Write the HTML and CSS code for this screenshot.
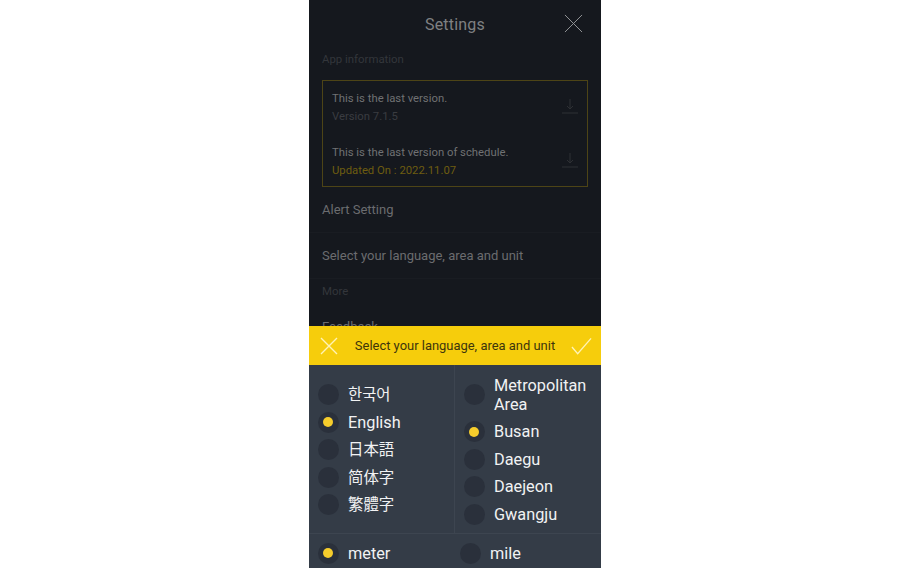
FILE: index.html
```html
<!DOCTYPE html>
<html lang="en">
<head>
<meta charset="utf-8">
<title>Settings</title>
<link rel="stylesheet" href="styles.css">
</head>
<body>
<main class="phone">
  <header class="top">
    <h1 class="title">Settings</h1>
    <svg class="close" viewBox="0 0 20 20"><path d="M1 1 19 19M19 1 1 19"/></svg>
  </header>
  <p class="label label-app">App information</p>
  <section class="box">
    <div class="box-row">
      <div class="box-text">
        <p class="box-main">This is the last version.</p>
        <p class="box-sub">Version 7.1.5</p>
      </div>
      <svg class="dl" viewBox="0 0 16 15"><path d="M8 0V10M5 7 8 10 11 7M0 14H16"/></svg>
    </div>
    <div class="box-row">
      <div class="box-text">
        <p class="box-main">This is the last version of schedule.</p>
        <p class="box-sub box-sub-gold">Updated On : 2022.11.07</p>
      </div>
      <svg class="dl" viewBox="0 0 16 15"><path d="M8 0V10M5 7 8 10 11 7M0 14H16"/></svg>
    </div>
  </section>
  <div class="item item-alert">Alert Setting</div>
  <div class="item">Select your language, area and unit</div>
  <p class="label label-more">More</p>
  <div class="item item-feedback">Feedback</div>

  <section class="sheet">
    <div class="bar">
      <svg class="bar-x" viewBox="0 0 18 18"><path d="M1 1 17 17M17 1 1 17"/></svg>
      <span class="bar-title">Select your language, area and unit</span>
      <svg class="bar-check" viewBox="0 0 22 18"><path d="M1 10 7 17 21 1"/></svg>
    </div>
    <div class="lists">
      <div class="list list-lang">
        <div class="opt"><i class="radio"></i><span class="cjk">한국어</span></div>
        <div class="opt"><i class="radio on"></i><span>English</span></div>
        <div class="opt"><i class="radio"></i><span class="cjk" lang="ja">日本語</span></div>
        <div class="opt"><i class="radio"></i><span class="cjk" lang="zh-CN">简体字</span></div>
        <div class="opt"><i class="radio"></i><span class="cjk" lang="zh-TW">繁體字</span></div>
      </div>
      <div class="list list-area">
        <div class="opt opt-tall"><i class="radio"></i><span>Metropolitan Area</span></div>
        <div class="opt"><i class="radio on"></i><span>Busan</span></div>
        <div class="opt"><i class="radio"></i><span>Daegu</span></div>
        <div class="opt"><i class="radio"></i><span>Daejeon</span></div>
        <div class="opt"><i class="radio"></i><span>Gwangju</span></div>
      </div>
    </div>
    <div class="units">
      <div class="opt unit-a"><i class="radio on"></i><span>meter</span></div>
      <div class="opt"><i class="radio"></i><span>mile</span></div>
    </div>
  </section>
</main>
</body>
</html>
```

FILE: styles.css
```css
* { box-sizing: border-box; }
html, body { margin: 0; height: 100%; background: #fff; }
body { display: flex; justify-content: center; overflow: hidden; font-family: Roboto, "Noto Sans CJK KR", sans-serif; }
p, h1 { margin: 0; font-weight: 400; }

.phone { position: relative; width: 292px; height: 568px; background: #15181e; overflow: hidden; }

.top { position: relative; height: 47px; padding-top: 2px; display: flex; align-items: center; justify-content: center; }
.title { font-size: 16px; color: #7f8082; letter-spacing: .2px; }
.close { position: absolute; right: 18px; top: 14px; width: 19px; height: 19px; fill: none; stroke: #96989b; stroke-width: 1; }

.label { font-size: 11.400px; line-height: 16px; color: #33363b; padding-left: 13px; }
.label-app { margin-top: 4px; }
.label-more { margin-top: 4px; }

.box { margin: 13px 13px 0; height: 107px; border: 1px solid #4d4416; }
.box-row { height: 54px; padding: 9px 9px 0 9px; display: flex; justify-content: space-between; }
.box-row:last-child { height: 51px; }
.box-main { font-size: 11.300px; line-height: 18px; color: #707173; }
.box-sub { font-size: 11.300px; line-height: 18px; color: #3a3c41; }
.box-sub-gold { color: #6e5d10; }
.dl { width: 16px; height: 15px; margin-top: 9px; fill: none; stroke: #2e3034; stroke-width: 1; }

.item { height: 46px; display: flex; align-items: center; padding-left: 13px; font-size: 13px; color: #6b6c6f; border-bottom: 1px solid #191c22; }
.item-feedback { height: 54px; border-bottom: 0; }

.sheet { position: absolute; left: 0; right: 0; bottom: 0; height: 242px; background: #343c47; color: #f1f2f3; font-size: 16.300px; }
.bar { height: 39px; background: #f6cd0c; display: flex; align-items: center; padding: 0 9px 0 11px; }
.bar-x { width: 18px; height: 18px; fill: none; stroke: #fff3b5; stroke-width: 1.400; }
.bar-title { flex: 1; text-align: center; padding-left: 1px; font-size: 12.950px; color: #3d350c; }
.bar-check { width: 21px; height: 18px; fill: none; stroke: #fff3b5; stroke-width: 1.400; }

.lists { height: 169px; display: flex; border-bottom: 1px solid #3d4550; }
.list { display: flex; flex-direction: column; }
.list-lang { width: 146px; padding: 16px 0 0 8.500px; border-right: 1px solid #3d4550; }
.list-area { flex: 1; padding: 10px 0 0 8.500px; }

.opt { height: 27.500px; display: flex; align-items: center; gap: 9.500px; line-height: 19px; }
.opt-tall { height: 43px; padding-bottom: 4px; }
.opt-tall span { width: 100px; }
.cjk { font-size: 15.400px; padding-top: 2px; }
.radio { flex: none; width: 21px; height: 21px; border-radius: 50%; background: #2a303b; display: flex; align-items: center; justify-content: center; }
.radio.on::after { content: ""; width: 10px; height: 10px; border-radius: 50%; background: #f6cd2c; }

.units { height: 34px; padding: 4px 0 0 8.500px; display: flex; align-items: center; }
.unit-a { width: 142px; }
```
